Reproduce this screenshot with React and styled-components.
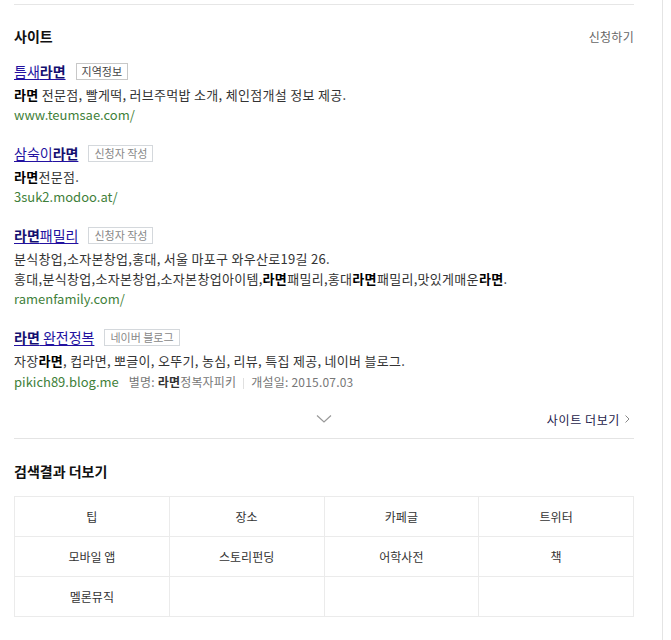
import styled, { createGlobalStyle } from 'styled-components';

const GlobalStyle = createGlobalStyle`
	body {
		margin: 0;
		background: #fff;
		font-family: "Noto Sans CJK KR", "Noto Sans", sans-serif;
		color: #333;
	}
`;

const Page = styled.div`
	width: 663px;
	min-height: 640px;
	border-right: 1px solid #e4e4e4;
	padding-top: 4px;
	box-sizing: border-box;
`;

const Column = styled.div`
	width: 620px;
	margin-left: 14px;
	border-top: 1px solid #e6e6e6;
`;

const SectionHead = styled.div`
	display: flex;
	justify-content: space-between;
	align-items: center;
	padding-top: ${(p) => p.$top || 22}px;
	height: 18px;
`;

const SectionTitle = styled.h2`
	margin: 0;
	font-size: 14px;
	font-weight: bold;
	color: #111;
	line-height: 18px;
`;

const ApplyLink = styled.a`
	font-size: 12px;
	color: #666;
	text-decoration: none;
	letter-spacing: 0.3px;
`;

const List = styled.ul`
	list-style: none;
	margin: 15px 0 0;
	padding: 0;
`;

const Item = styled.li`
	margin-bottom: 17px;
	&:last-child {
		margin-bottom: 0;
	}
`;

const TitleRow = styled.div`
	display: flex;
	align-items: center;
	height: 22px;
	gap: 10px;
`;

const TitleLink = styled.a`
	font-size: 14px;
	color: #2311a0;
	text-decoration: underline;
	text-underline-offset: 2px;
	b {
		color: #141070;
	}
`;

const Tag = styled.span`
	display: inline-block;
	border: 1px solid ${(p) => (p.$strong ? '#c8c8c8' : '#d4d8dc')};
	font-size: 11px;
	line-height: 15px;
	padding: 0 5px;
	color: ${(p) => (p.$strong ? '#444' : '#888')};
	background: #fff;
`;

const Desc = styled.p`
	margin: 3px 0 0;
	font-size: 13px;
	line-height: 20px;
	color: #333;
	letter-spacing: 0.3px;
	b {
		color: #000;
	}
`;

const Url = styled.span`
	font-size: 13px;
	color: #3f7f3a;
	letter-spacing: 0;
`;

const Meta = styled.div`
	display: flex;
	align-items: center;
	height: 21px;
	font-size: 12px;
	color: #777;
	gap: 10px;
	letter-spacing: 0.2px;
	b {
		color: #333;
	}
`;

const Sep = styled.span`
	display: inline-block;
	width: 1px;
	height: 11px;
	background: #e0e0e0;
	margin: 0 7px;
	vertical-align: middle;
`;

const Footer = styled.div`
	position: relative;
	display: flex;
	justify-content: flex-end;
	align-items: center;
	height: 38px;
	margin-top: 8px;
	border-bottom: 1px solid #e4e4e4;
`;

const Fold = styled.button`
	position: absolute;
	left: 50%;
	top: 50%;
	transform: translate(-50%, -50%);
	border: 0;
	background: none;
	padding: 0;
	display: flex;
`;

const MoreLink = styled.a`
	font-size: 12px;
	color: #1d1a4a;
	text-decoration: none;
	margin-right: 4px;
	display: flex;
	align-items: center;
	gap: 5px;
	letter-spacing: 0.6px;
`;

const Grid = styled.div`
	display: grid;
	grid-template-columns: repeat(4, 1fr);
	margin-top: 16px;
	border-top: 1px solid #ebebeb;
	border-left: 1px solid #ebebeb;
`;

const Cell = styled.div`
	height: 39px;
	display: flex;
	align-items: center;
	justify-content: center;
	border-right: 1px solid #ebebeb;
	border-bottom: 1px solid #ebebeb;
	font-size: 12px;
	color: #333;
`;

const items = [
	{
		title: (
			<>
				틈새<b>라면</b>
			</>
		),
		tag: '지역정보',
		strong: true,
		desc: [
			<>
				<b>라면</b> 전문점, 빨게떡, 러브주먹밥 소개, 체인점개설 정보 제공.
			</>,
		],
		url: 'www.teumsae.com/',
	},
	{
		title: (
			<>
				삼숙이<b>라면</b>
			</>
		),
		tag: '신청자 작성',
		desc: [
			<>
				<b>라면</b>전문점.
			</>,
		],
		url: '3suk2.modoo.at/',
	},
	{
		title: (
			<>
				<b>라면</b>패밀리
			</>
		),
		tag: '신청자 작성',
		desc: [
			<>분식창업,소자본창업,홍대, 서울 마포구 와우산로19길 26.</>,
			<>
				홍대,분식창업,소자본창업,소자본창업아이템,<b>라면</b>패밀리,홍대<b>라면</b>패밀리,맛있게매운<b>라면</b>.
			</>,
		],
		url: 'ramenfamily.com/',
	},
	{
		title: (
			<>
				<b>라면</b> 완전정복
			</>
		),
		tag: '네이버 블로그',
		desc: [
			<>
				자장<b>라면</b>, 컵라면, 뽀글이, 오뚜기, 농심, 리뷰, 특집 제공, 네이버 블로그.
			</>,
		],
		url: 'pikich89.blog.me',
		meta: true,
	},
];

const more = ['팁', '장소', '카페글', '트위터', '모바일 앱', '스토리펀딩', '어학사전', '책', '멜론뮤직', '', '', ''];

const App = () => {
	return (
		<Page>
			<GlobalStyle />
			<Column>
				<SectionHead>
					<SectionTitle>사이트</SectionTitle>
					<ApplyLink>신청하기</ApplyLink>
				</SectionHead>
				<List>
					{items.map((it, i) => (
						<Item key={i}>
							<TitleRow>
								<TitleLink>{it.title}</TitleLink>
								<Tag $strong={it.strong}>{it.tag}</Tag>
							</TitleRow>
							<Desc>
								{it.desc.map((d, j) => (
									<span key={j}>
										{d}
										{j < it.desc.length - 1 && <br />}
									</span>
								))}
							</Desc>
							{it.meta ? (
								<Meta>
									<Url>{it.url}</Url>
									<span>
										별명: <b>라면</b>정복자피키
										<Sep />
										개설일: 2015.07.03
									</span>
								</Meta>
							) : (
								<Desc as="div" style={{ marginTop: 0 }}>
									<Url>{it.url}</Url>
								</Desc>
							)}
						</Item>
					))}
				</List>
				<Footer>
					<Fold aria-label="펼치기">
						<svg width="16" height="9" viewBox="0 0 16 9">
							<polyline points="1,1 8,7.5 15,1" fill="none" stroke="#999" strokeWidth="1.2" />
						</svg>
					</Fold>
					<MoreLink>
						사이트 더보기
						<svg width="5" height="8" viewBox="0 0 5 8">
							<polyline points="0.5,0.5 4,4 0.5,7.5" fill="none" stroke="#888" strokeWidth="1" />
						</svg>
					</MoreLink>
				</Footer>
				<SectionHead $top={23}>
					<SectionTitle>검색결과 더보기</SectionTitle>
				</SectionHead>
				<Grid>
					{more.map((m, i) => (
						<Cell key={i}>{m}</Cell>
					))}
				</Grid>
			</Column>
		</Page>
	);
};

export default App;
